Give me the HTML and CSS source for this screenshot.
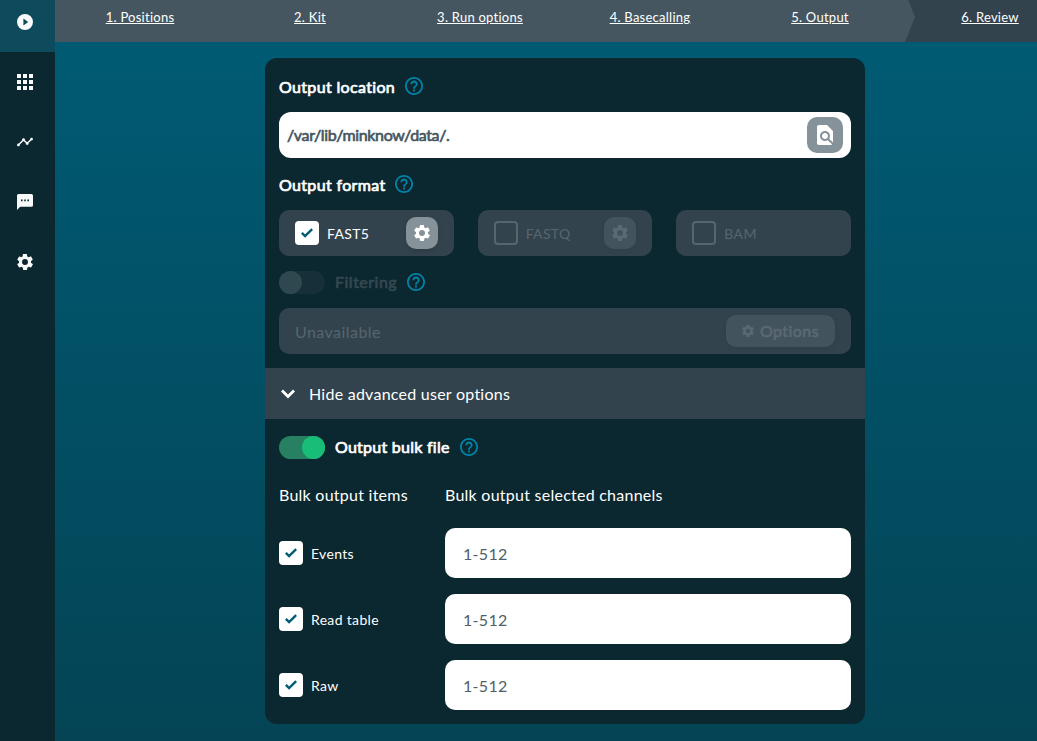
FILE: index.html
```html
<!DOCTYPE html>
<html lang="en">
<head>
<meta charset="utf-8">
<title>Run setup – Output</title>
<link rel="stylesheet" href="styles.css">
</head>
<body>
<svg class="defs" aria-hidden="true">
  <symbol id="gear" viewBox="2 2 20 20"><path d="M19.4 13c0-.3.1-.6.1-1s0-.7-.1-1l2.1-1.7c.2-.2.3-.4.1-.6l-2-3.500c-.1-.2-.4-.3-.6-.2l-2.500 1c-.5-.4-1.100-.7-1.700-1l-.4-2.600c0-.2-.2-.4-.5-.4h-4c-.2 0-.5.2-.5.4l-.4 2.700c-.6.200-1.100.6-1.700 1L5 5.100c-.2-.1-.5 0-.6.200l-2 3.500c-.1.100-.1.400.1.500L4.600 11c0 .3-.1.600-.1 1s0 .7.1 1l-2.100 1.600c-.2.200-.3.400-.1.600l2 3.500c.1.200.4.300.6.200l2.500-1c.5.400 1.100.7 1.700 1l.4 2.600c0 .2.200.4.500.4h4c.2 0 .5-.2.5-.4l.4-2.600c.6-.3 1.200-.6 1.700-1l2.500 1c.2.100.5 0 .6-.2l2-3.500c.1-.2.100-.5-.1-.6L19.400 13zM12 15.700a3.700 3.700 0 1 1 0-7.400 3.700 3.700 0 0 1 0 7.400z" fill="currentColor"/></symbol>
  <symbol id="help" viewBox="2 2 20 20"><path d="M11 18h2v-2h-2v2zm1-16C6.480 2 2 6.480 2 12s4.480 10 10 10 10-4.480 10-10S17.520 2 12 2zm0 18c-4.410 0-8-3.590-8-8s3.590-8 8-8 8 3.590 8 8-3.590 8-8 8zm0-14c-2.210 0-4 1.790-4 4h2c0-1.100.9-2 2-2s2 .9 2 2c0 2-3 1.750-3 5h2c0-2.250 3-2.500 3-5 0-2.210-1.790-4-4-4z" fill="currentColor"/></symbol>
  <symbol id="check" viewBox="0 0 24 24"><path d="M1.730 11.910 8.100 18.280 22.300 4.090" fill="none" stroke="currentColor" stroke-width="4.800"/></symbol>
</svg>
<div class="app">
  <nav class="sidebar">
    <a class="side-item side-active"><svg viewBox="2 2 20 20"><path d="M12 2a10 10 0 1 0 0 20 10 10 0 0 0 0-20zm-2 14.500v-9l6 4.500-6 4.500z" fill="currentColor"/></svg></a>
    <a class="side-item"><svg viewBox="4 4 16 16"><path d="M4 8h4V4H4v4zm6 12h4v-4h-4v4zm-6 0h4v-4H4v4zm0-6h4v-4H4v4zm6 0h4v-4h-4v4zm6-10v4h4V4h-4zm-6 4h4V4h-4v4zm6 6h4v-4h-4v4zm0 6h4v-4h-4v4z" fill="currentColor"/></svg></a>
    <a class="side-item"><svg viewBox="1 1 22 22"><path d="M23 8c0 1.100-.9 2-2 2-.180 0-.350-.020-.510-.070l-3.560 3.550c.050.160.070.340.070.520 0 1.100-.9 2-2 2s-2-.9-2-2c0-.180.020-.360.070-.520l-2.550-2.550c-.160.050-.340.070-.520.070s-.360-.020-.520-.070l-4.550 4.560c.050.160.070.330.070.510 0 1.100-.9 2-2 2s-2-.9-2-2 .9-2 2-2c.180 0 .350.020.510.070l4.560-4.550C8.020 9.360 8 9.180 8 9c0-1.100.9-2 2-2s2 .9 2 2c0 .180-.020.360-.070.520l2.550 2.550c.160-.050.340-.070.520-.070s.360.020.520.070l3.550-3.560C19.020 8.350 19 8.180 19 8c0-1.100.9-2 2-2s2 .9 2 2z" fill="currentColor"/></svg></a>
    <a class="side-item"><svg viewBox="2 2 20 20"><path d="M20 2H4a2 2 0 0 0-2 2v18l4-4h14a2 2 0 0 0 2-2V4a2 2 0 0 0-2-2zM9 11H7V9h2v2zm4 0h-2V9h2v2zm4 0h-2V9h2v2z" fill="currentColor"/></svg></a>
    <a class="side-item"><svg><use href="#gear"/></svg></a>
  </nav>
  <div class="page">
    <header class="steps">
      <div class="steps-done">
        <a class="step">1. Positions</a><a class="step">2. Kit</a><a class="step">3. Run options</a><a class="step">4. Basecalling</a><a class="step">5. Output</a>
      </div>
      <a class="step">6. Review</a>
    </header>
    <main class="card">
      <section class="section">
        <div class="title-row"><h2 class="title">Output location</h2><svg class="help"><use href="#help"/></svg></div>
        <div class="path-field"><span>/var/lib/minknow/data/.</span>
          <button class="browse"><svg viewBox="4 2 16 20"><path d="M20 19.590V8l-6-6H6c-1.100 0-1.990.9-1.990 2L4 20c0 1.100.890 2 1.990 2H18c.450 0 .850-.150 1.190-.4l-4.430-4.430c-.8.520-1.740.830-2.760.830-2.760 0-5-2.240-5-5s2.240-5 5-5 5 2.240 5 5c0 1.020-.310 1.960-.830 2.750L20 19.590zM9 13c0 1.660 1.340 3 3 3s3-1.340 3-3-1.340-3-3-3-3 1.340-3 3z" fill="currentColor"/></svg></button>
        </div>
        <div class="title-row format-title"><h2 class="title">Output format</h2><svg class="help"><use href="#help"/></svg></div>
        <div class="formats">
          <div class="format"><span class="box checked"><svg><use href="#check"/></svg></span><span class="label">FAST5</span><button class="gear-button"><svg><use href="#gear"/></svg></button></div>
          <div class="format"><span class="box empty"></span><span class="label dim">FASTQ</span><button class="gear-button disabled"><svg><use href="#gear"/></svg></button></div>
          <div class="format"><span class="box empty"></span><span class="label dim">BAM</span></div>
        </div>
        <div class="filter-row"><span class="toggle off"></span><h2 class="title title-dim">Filtering</h2><svg class="help"><use href="#help"/></svg></div>
        <div class="filter-field"><span>Unavailable</span><button class="options"><svg><use href="#gear"/></svg>Options</button></div>
      </section>
      <div class="advanced"><svg viewBox="0 0 16 10"><path d="M2 1.500l6 6 6-6" fill="none" stroke="currentColor" stroke-width="2.800"/></svg><span>Hide advanced user options</span></div>
      <section class="bulk">
        <div class="bulk-title"><span class="toggle on"></span><h2 class="title">Output bulk file</h2><svg class="help"><use href="#help"/></svg></div>
        <div class="bulk-grid">
          <span class="column-head">Bulk output items</span><span class="column-head">Bulk output selected channels</span>
          <div class="item"><span class="box checked"><svg><use href="#check"/></svg></span><span class="label">Events</span></div><div class="channels">1-512</div>
          <div class="item"><span class="box checked"><svg><use href="#check"/></svg></span><span class="label">Read table</span></div><div class="channels">1-512</div>
          <div class="item"><span class="box checked"><svg><use href="#check"/></svg></span><span class="label">Raw</span></div><div class="channels">1-512</div>
        </div>
      </section>
    </main>
  </div>
</div>
</body>
</html>
```
FILE: styles.css
```css
* { box-sizing: border-box; }
body {
  margin: 0;
  height: 741px;
  overflow: hidden;
  font-family: Lato, "Liberation Sans", sans-serif;
  font-size: 16px;
  color: #fff;
}
.defs { display: none; }
svg { display: block; flex: none; }
button { border: 0; padding: 0; font: inherit; display: flex; align-items: center; justify-content: center; }

.app { display: flex; height: 741px; }
.sidebar { width: 55px; flex: none; background: #0b272f; color: #f8fafc; }
.side-item { display: flex; height: 60px; padding: 22px 0 0 17px; }
.side-item svg { width: 16px; height: 16px; }
.side-active { height: 52px; padding-top: 14px; background: #0d4a5b; }
.page {
  flex: 1;
  min-width: 0;
  background: linear-gradient(#005c75, #044455);
}

.steps { display: flex; height: 42px; overflow: hidden; background: #33434d; }
.steps-done {
  display: flex;
  flex: none;
  width: 860px;
  height: 42px;
  background: #455660;
  clip-path: polygon(0 0, 853.200px 0, 100% 17px, 850px 100%, 0 100%);
}
.step {
  flex: none;
  width: 170px;
  padding-top: 9px;
  text-align: center;
  font-size: 13px;
  line-height: 16px;
  letter-spacing: 0.250px;
  text-decoration: underline;
}
.steps > .step { margin-left: -10px; }

.card {
  width: 600px;
  height: 666px;
  margin: 16px 0 0 210px;
  border-radius: 12px;
  background: #0b272f;
}
.section { height: 310px; padding: 0 14px; }
.title-row { display: flex; gap: 10px; align-items: center; height: 54px; padding-top: 2px; }
.title {
  margin: 0;
  padding-top: 1px;
  font-size: 16px;
  line-height: 20px;
  font-weight: 400;
  letter-spacing: 0.340px;
  -webkit-text-stroke: 0.700px currentColor;
}
.title-dim { color: #344850; letter-spacing: 0.500px; padding-top: 0; }
.help { width: 18px; height: 18px; color: #0084a9; }
.path-field {
  display: flex;
  align-items: center;
  justify-content: space-between;
  height: 46px;
  padding: 0 8px;
  border-radius: 12px;
  background: #fff;
  color: #455660;
}
.path-field span { padding-bottom: 1px; letter-spacing: -0.370px; -webkit-text-stroke: 0.650px currentColor; }
.browse { width: 36px; height: 36px; border-radius: 10px; background: #869299; color: #fff; }
.browse svg { width: 16px; height: 20px; }
.format-title { height: 52px; padding-top: 0; }

.formats { display: flex; gap: 24px; }
.format {
  display: flex;
  flex: 1;
  align-items: center;
  height: 46px;
  padding: 0 16px;
  border-radius: 10px;
  background: #33434d;
}
.box {
  display: flex;
  flex: none;
  align-items: center;
  justify-content: center;
  width: 24px;
  height: 24px;
  margin-right: 8px;
  border-radius: 4px;
}
.checked { background: #fff; color: #005c75; }
.checked svg { width: 12px; height: 12px; }
.empty { border: 2px solid #56666f; }
.label { font-size: 14px; line-height: 20px; letter-spacing: 0.330px; padding-top: 2px; }
.dim { color: #56666f; }
.gear-button {
  width: 32px;
  height: 32px;
  margin-left: auto;
  border-radius: 10px;
  background: #869299;
  color: #fff;
  box-shadow: 0 2px 5px rgba(0, 0, 0, 0.150);
}
.gear-button svg { width: 16px; height: 16px; }
.disabled { background: #43535d; color: #5a6973; box-shadow: 0 2px 5px rgba(0, 0, 0, 0.050); }

.filter-row { display: flex; gap: 10px; align-items: center; height: 52px; }
.toggle { display: flex; width: 46px; height: 23px; border-radius: 12px; }
.toggle::before { content: ""; width: 23px; height: 23px; border-radius: 50%; }
.off { background: #162f38; }
.off::before { background: #2f474f; }
.on { justify-content: flex-end; background: #268061; }
.on::before { background: #18bd78; }
.filter-field {
  display: flex;
  align-items: center;
  justify-content: space-between;
  height: 46px;
  padding: 0 16px;
  border-radius: 10px;
  background: #33434d;
  color: #56666f;
  letter-spacing: 0.450px;
}
.filter-field span { padding-top: 1px; }
.options {
  width: 109px;
  height: 32px;
  gap: 6px;
  padding-bottom: 1px;
  border-radius: 10px;
  background: #43535d;
  color: #5a6973;
  letter-spacing: 0.450px;
  -webkit-text-stroke: 0.650px currentColor;
  box-shadow: 0 2px 5px rgba(0, 0, 0, 0.080);
}
.options svg { width: 12px; height: 12px; }

.advanced {
  display: flex;
  align-items: center;
  gap: 13px;
  height: 51px;
  padding: 0 15px;
  background: #33434d;
  letter-spacing: 0.250px;
}
.advanced svg { width: 16px; height: 10px; }
.advanced span { padding-bottom: 1px; }
.bulk { padding: 17px 14px 0; }
.bulk-title { display: flex; align-items: center; gap: 10px; height: 23px; }
.bulk-title .title { padding: 0 0 1px; letter-spacing: 0.250px; }
.bulk-title .help { margin-bottom: 1px; }
.bulk-grid { display: grid; grid-template-columns: 150px 406px; gap: 16px; padding-top: 26px; }
.column-head { height: 27px; line-height: 20px; letter-spacing: 0.250px; white-space: nowrap; }
.item { display: flex; align-items: center; }
.channels {
  height: 50px;
  padding: 1px 18px 0;
  border-radius: 10px;
  background: #fff;
  color: #4f5e67;
  line-height: 50px;
  letter-spacing: 0.300px;
}
```
